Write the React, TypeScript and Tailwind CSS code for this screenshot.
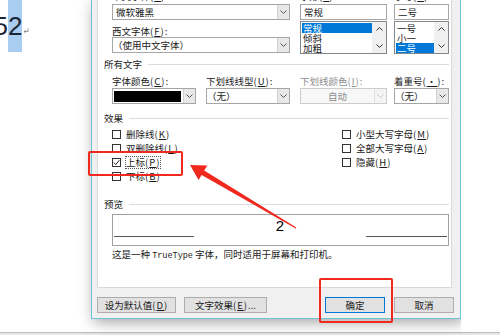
import React from "react";

const cjk = "font-['Noto_Sans_CJK_SC','Noto_Sans',sans-serif]";

const Key = ({ k }: { k: string }) => (
  <span className="tracking-[1px]">
    (<span className="underline">{k}</span>)
  </span>
);

const Chevron = ({ up = false }: { up?: boolean }) => (
  <svg width="7" height="4" viewBox="0 0 7 4">
    <path
      d={up ? "M0.5 3.5 L3.5 0.5 L6.5 3.5" : "M0.5 0.5 L3.5 3.5 L6.5 0.5"}
      fill="none"
      stroke="currentColor"
      strokeWidth="1"
    />
  </svg>
);

const Combo = ({
  className = "",
  disabled = false,
  children,
}: {
  className?: string;
  disabled?: boolean;
  children?: React.ReactNode;
}) => (
  <div
    className={`flex h-[16px] border ${
      disabled ? "border-[#cccccc] bg-[#f7f7f7] text-[#8d8d8d]" : "border-[#a6a6a6] bg-white"
    } ${className}`}
  >
    <div className="flex min-w-0 flex-1 items-center leading-[14px]">{children}</div>
    <div
      className={`flex w-[12px] items-center justify-center border-l ${
        disabled ? "border-[#e0e0e0] bg-[#f4f4f4] text-[#c4c4c4]" : "border-[#d0d0d0] bg-[#e8e8e8] text-[#555555]"
      }`}
    >
      <Chevron />
    </div>
  </div>
);

const ListBox = ({ items, sel }: { items: string[]; sel: number }) => (
  <div className="mt-[1px] flex h-[33px] border border-[#828790] bg-white">
    <div className="flex min-w-0 flex-1 flex-col pl-[1px] pt-[0.5px]">
      {items.map((t, i) => (
        <div
          key={t}
          className={`h-[10px] pl-[1px] leading-[10px] ${i === sel ? "bg-[#0078d7] text-white" : ""}`}
        >
          {t}
        </div>
      ))}
    </div>
    <div className="flex w-[14px] flex-col items-center justify-between bg-[#f0f0f0] py-[5px] text-[#333333]">
      <Chevron up />
      <Chevron />
    </div>
  </div>
);

const Check = ({
  label,
  k,
  checked = false,
  focus = false,
}: {
  label: string;
  k: string;
  checked?: boolean;
  focus?: boolean;
}) => (
  <div className="flex h-[14px] items-center">
    <div className="flex h-[9px] w-[9px] shrink-0 items-center justify-center border border-[#333333] bg-white">
      {checked && (
        <svg width="7" height="7" viewBox="0 0 7 7">
          <path d="M0.8 3.6 L2.8 5.6 L6.3 1.2" fill="none" stroke="#222222" strokeWidth="1" />
        </svg>
      )}
    </div>
    <span
      className={`leading-[11px] ${
        focus ? "ml-[4px] border border-dotted border-[#555555]" : "ml-[5px]"
      }`}
    >
      {label}
      <Key k={k} />
    </span>
  </div>
);

const Section = ({ title, className = "" }: { title: string; className?: string }) => (
  <div className={`-ml-[8px] flex h-[12px] items-center ${className}`}>
    <span className="leading-[12px]">{title}</span>
    <div className="ml-[6px] h-px flex-1 bg-[#dcdcdc]" />
  </div>
);

const Btn = ({
  className = "",
  primary = false,
  children,
}: {
  className?: string;
  primary?: boolean;
  children: React.ReactNode;
}) => (
  <div
    className={`flex h-[16px] items-center justify-center border bg-[#e1e1e1] leading-[12px] ${
      primary ? "border-[#0078d7]" : "border-[#adadad]"
    } ${className}`}
  >
    {children}
  </div>
);

const DocPane = () => (
  <div className="w-[91px] shrink-0 bg-white">
    <div className="-ml-[6.5px] flex items-start font-['Liberation_Sans',sans-serif] text-[26px] text-[#1c2636]">
      <span className="h-[52px] leading-[52px]">5</span>
      <span className="h-[52px] bg-[#a8cdf1] leading-[52px]">2</span>
      <svg width="6" height="6" viewBox="0 0 6 6" className="ml-[1px] mt-[28px]">
        <path d="M5 0.5 V3.5 H1 M2.6 2 L1 3.5 L2.6 5" fill="none" stroke="#8a8a8a" strokeWidth="0.9" />
      </svg>
    </div>
  </div>
);

const FontDialog = () => (
  <div className="flex h-[319px] w-[370px] shrink-0 flex-col border-x border-b border-[#6ec3d6] bg-[#f0f0f0] shadow-[3px_3px_14px_rgba(0,0,0,0.38)]">
    <div className="ml-[5px] h-[288px] w-[355px] overflow-hidden border-x border-b border-[#d9d9d9] bg-white pl-[14px] pr-[2px]">
      {/* font / style / size */}
      <div className="-mt-[10px] flex items-start">
        <div className="flex w-[178px] flex-col">
          <div className="h-[12px] leading-[12px]">
            中文字体<Key k="T" />:
          </div>
          <Combo className="mt-[2px]">
            <span className="pl-[3px]">微软雅黑</span>
          </Combo>
          <div className="mt-[5px] h-[12px] leading-[12px]">
            西文字体<Key k="F" />:
          </div>
          <Combo>
            <span>（使用中文字体）</span>
          </Combo>
        </div>
        <div className="ml-[10px] flex w-[87px] flex-col">
          <div className="h-[12px] leading-[12px]">
            字形<Key k="Y" />:
          </div>
          <div className="mt-[2px] flex h-[16px] items-center border border-[#a6a6a6] pl-[3px] leading-[14px]">常规</div>
          <ListBox items={["常规", "倾斜", "加粗"]} sel={0} />
        </div>
        <div className="ml-[7px] flex w-[55px] flex-col">
          <div className="h-[12px] leading-[12px]">
            字号<Key k="S" />:
          </div>
          <div className="mt-[2px] flex h-[16px] items-center border border-[#a6a6a6] pl-[3px] leading-[14px]">二号</div>
          <ListBox items={["一号", "小一", "二号"]} sel={2} />
        </div>
      </div>

      <Section title="所有文字" className="mt-[4px]" />

      <div className="mt-[5px] flex h-[12px] leading-[12px]">
        <div className="w-[94px]">
          字体颜色<Key k="C" />:
        </div>
        <div className="w-[94px]">
          下划线线型<Key k="U" />:
        </div>
        <div className="w-[94px] text-[#8d8d8d]">
          下划线颜色<Key k="I" />:
        </div>
        <div>
          着重号<Key k="·" />:
        </div>
      </div>
      <div className="mt-[1px] flex">
        <Combo className="w-[84px]">
          <div className="ml-[1px] mr-[2px] h-[11px] flex-1 bg-black" />
        </Combo>
        <Combo className="ml-[10px] w-[84px]">
          <span>（无）</span>
        </Combo>
        <Combo disabled className="ml-[10px] w-[87px]">
          <span className="flex-1 text-center">自动</span>
        </Combo>
        <Combo className="ml-[7px] w-[55px]">
          <span>（无）</span>
        </Combo>
      </div>

      <Section title="效果" className="mt-[8px]" />

      <div className="mt-[3px] flex">
        <div className="flex w-[230px] flex-col">
          <Check label="删除线" k="K" />
          <Check label="双删除线" k="L" />
          <Check label="上标" k="P" checked focus />
          <Check label="下标" k="B" />
        </div>
        <div className="flex flex-col">
          <Check label="小型大写字母" k="M" />
          <Check label="全部大写字母" k="A" />
          <Check label="隐藏" k="H" />
        </div>
      </div>

      <Section title="预览" className="mt-[15px]" />

      <div className="mt-[4px] flex h-[32px] items-end border border-[#a0a0a0] px-[1px] pb-[8px]">
        <div className="h-px w-[80px] bg-[#555555]" />
        <div className="flex-1 self-start pt-[3px] text-center font-['Liberation_Sans',sans-serif] text-[15px] leading-[15px] text-black">
          2
        </div>
        <div className="h-px w-[81px] bg-[#555555]" />
      </div>

      <div className="mt-[2px] h-[12px] leading-[12px]">
        这是一种 <span className="font-['Liberation_Mono',monospace] text-[8.5px]">TrueType</span>{" "}
        字体，同时适用于屏幕和打印机。
      </div>
    </div>

    <div className="mt-[9px] flex h-[16px] pl-[5px] pr-[6px]">
      <Btn className="w-[79px]">
        设为默认值<Key k="D" />
      </Btn>
      <Btn className="ml-[8px] w-[83px]">
        文字效果<Key k="E" />...
      </Btn>
      <div className="flex-1" />
      <Btn primary className="w-[60px]">
        确定
      </Btn>
      <Btn className="ml-[9px] w-[60px]">取消</Btn>
    </div>
  </div>
);

const Annotations = () => (
  <>
    <div className="absolute left-[88px] top-[151px] h-[25px] w-[95px] rounded-[2px] border-2 border-[#f0281e]" />
    <div className="absolute left-[319px] top-[278px] h-[45px] w-[74px] rounded-[2px] border-2 border-[#f0281e]" />
    <svg className="pointer-events-none absolute left-0 top-0" width="500" height="335" viewBox="0 0 500 335">
      <polygon
        points="190,165 207.3,165.4 204.2,170.5 296.3,227.5 295.7,228.5 201.6,174.9 198.6,180 190,165"
        fill="#f0281e"
      />
    </svg>
  </>
);

export default function App() {
  return (
    <div className={`relative h-[335px] w-[500px] overflow-hidden bg-white text-[9.5px] text-[#1a1a1a] ${cjk}`}>
      <div className="flex h-[332px]">
        <DocPane />
        <FontDialog />
        <div className="flex-1 bg-white" />
      </div>
      <div className="h-[3px] border-t border-[#bdbdbd] bg-[#e6e6e6]" />
      <Annotations />
    </div>
  );
}
